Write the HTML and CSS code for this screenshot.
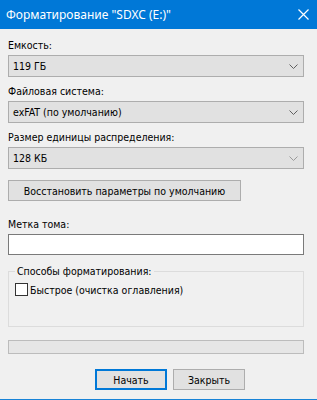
FILE: index.html
```html
<!DOCTYPE html>
<html lang="ru">
<head>
<meta charset="utf-8">
<title>Форматирование</title>
<link rel="stylesheet" href="styles.css">
</head>
<body>
<div class="window">
  <div class="titlebar">
    <span class="title">Форматирование "SDXC (E:)"</span>
    <svg class="close" width="11" height="11" viewBox="0 0 11 11"><path d="M0.5 0.5 L10.5 10.5 M10.5 0.5 L0.5 10.5" stroke="#fff" stroke-width="1.2" fill="none"/></svg>
  </div>
  <div class="content">
    <div class="field first">
      <div class="label">Емкость:</div>
      <div class="combo"><span>119 ГБ</span><svg class="chev" width="9" height="5" viewBox="0 0 9 5"><path d="M0.5 0.5 L4.5 4.5 L8.5 0.5" stroke="#606060" fill="none"/></svg></div>
    </div>
    <div class="field">
      <div class="label">Файловая система:</div>
      <div class="combo"><span>exFAT (по умолчанию)</span><svg class="chev" width="9" height="5" viewBox="0 0 9 5"><path d="M0.5 0.5 L4.5 4.5 L8.5 0.5" stroke="#606060" fill="none"/></svg></div>
    </div>
    <div class="field">
      <div class="label">Размер единицы распределения:</div>
      <div class="combo"><span>128 КБ</span><svg class="chev" width="9" height="5" viewBox="0 0 9 5"><path d="M0.5 0.5 L4.5 4.5 L8.5 0.5" stroke="#9a9a9a" fill="none"/></svg></div>
    </div>
    <div class="btn restore">Восстановить параметры по умолчанию</div>
    <div class="field volume">
      <div class="label">Метка тома:</div>
      <div class="input"></div>
    </div>
    <fieldset class="group">
      <legend>Способы форматирования:</legend>
      <label class="check"><span class="box"></span><span>Быстрое (очистка оглавления)</span></label>
    </fieldset>
    <div class="progress"></div>
    <div class="actions">
      <div class="btn action default">Начать</div>
      <div class="btn action">Закрыть</div>
    </div>
  </div>
</div>
</body>
</html>
```
FILE: styles.css
```css
* { box-sizing: border-box; }
html, body { margin: 0; padding: 0; }
body {
  width: 317px;
  height: 400px;
  background: #f0f0f0;
  overflow: hidden;
  font-family: "DejaVu Sans Condensed", "DejaVu Sans", "Liberation Sans", sans-serif;
  font-size: 10.5px;
  color: #000;
}
.window {
  height: 400px;
  border-bottom: 1px solid #1883d7;
}
.titlebar {
  height: 29px;
  background: #0078d7;
  display: flex;
  align-items: center;
  justify-content: space-between;
  padding: 0 8px 1px 6px;
}
.title {
  color: #fff;
  font-family: "Noto Sans", "Open Sans", sans-serif;
  font-size: 12px;
}
.content {
  padding: 0 13px 0 8px;
}
.field { margin-top: 8px; }
.field.first { margin-top: 10px; }
.label {
  height: 13px;
  line-height: 13px;
  margin-bottom: 3px;
}
.combo {
  height: 22px;
  background: #e1e1e1;
  border: 1px solid #adadad;
  display: flex;
  align-items: center;
  justify-content: space-between;
  padding: 0 5px 0 4px;
}
.chev { margin-top: 1px; }
.btn {
  height: 21px;
  background: #e1e1e1;
  border: 1px solid #adadad;
  display: flex;
  align-items: center;
  justify-content: center;
}
.restore {
  width: 233px;
  margin-top: 11px;
}
.volume { margin-top: 17px; }
.input {
  height: 21px;
  background: #fff;
  border: 1px solid #7a7a7a;
}
.group {
  margin: 10px 0 0 0;
  padding: 5px 0 0 6px;
  height: 62px;
  border: 1px solid #dcdcdc;
}
.group legend {
  padding: 0 2px;
  margin-left: 0;
  line-height: 13px;
}
.check {
  display: flex;
  align-items: center;
  gap: 2px;
}
.box {
  width: 13px;
  height: 13px;
  background: #fff;
  border: 1px solid #333;
}
.progress {
  margin-top: 13px;
  height: 14px;
  background: #e6e6e6;
  border: 1px solid #bcbcbc;
}
.actions {
  margin-top: 15px;
  display: flex;
  gap: 6px;
  padding-left: 87px;
}
.action { width: 72px; }
.default {
  border-color: #0078d7;
  box-shadow: inset 0 0 0 1px #0078d7;
}
```
